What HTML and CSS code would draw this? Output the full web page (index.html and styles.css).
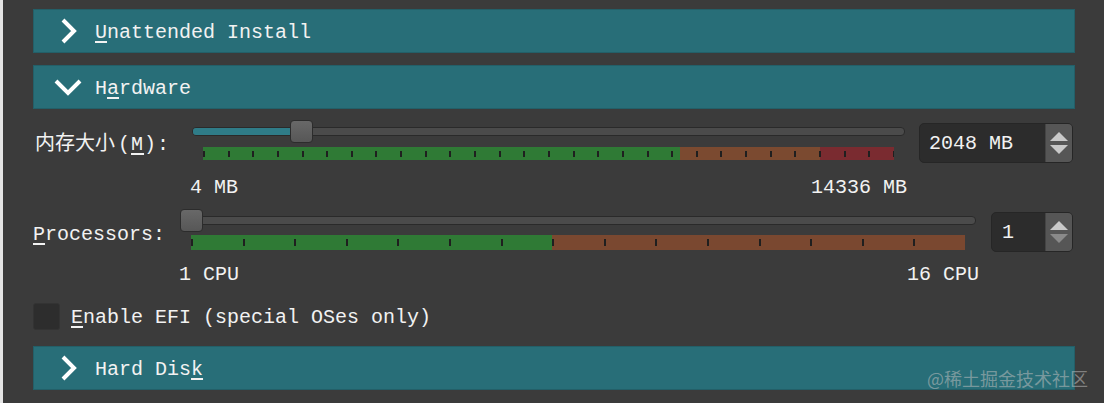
FILE: index.html
```html
<!DOCTYPE html>
<html lang="zh-CN">
<head>
    <meta charset="UTF-8">
    <title>Hardware</title>
    <link rel="stylesheet" href="styles.css">
</head>
<body>
    <div class="page">
        <div class="section-bar">
            <svg class="chevron" width="28" height="28" viewBox="0 0 28 28"><path d="M9 3 L20 14 L9 25" /></svg>
            <span class="bar-text"><u>U</u>nattended Install</span>
        </div>

        <div class="section-bar bar-open">
            <svg class="chevron" width="28" height="28" viewBox="0 0 28 28"><path d="M2 8 L14 20 L26 8" /></svg>
            <span class="bar-text">H<u>a</u>rdware</span>
        </div>

        <div class="row row-mem">
            <div class="label label-mem">内存大小<span class="mnemonic">(<u>M</u>):</span></div>
            <div class="slider-col slider-mem">
                <div class="slider">
                    <div class="groove"><div class="groove-fill"></div></div>
                    <div class="handle" style="left: 98px"></div>
                </div>
                <div class="scale scale-mem"></div>
                <div class="scale-labels"><span>4 MB</span><span>14336 MB</span></div>
            </div>
            <div class="spinbox spin-mem">
                <span class="spin-value">2048 MB</span>
                <span class="spin-buttons"><i class="arrow-up"></i><i class="arrow-down"></i></span>
            </div>
        </div>

        <div class="row row-cpu">
            <div class="label label-cpu"><u>P</u>rocessors:</div>
            <div class="slider-col slider-cpu">
                <div class="slider">
                    <div class="groove"></div>
                    <div class="handle" style="left: 0"></div>
                </div>
                <div class="scale scale-cpu"></div>
                <div class="scale-labels"><span>1 CPU</span><span>16 CPU</span></div>
            </div>
            <div class="spinbox spin-cpu">
                <span class="spin-value">1</span>
                <span class="spin-buttons"><i class="arrow-up"></i><i class="arrow-down dim"></i></span>
            </div>
        </div>

        <label class="check-row">
            <span class="checkbox"></span>
            <span class="check-text"><u>E</u>nable EFI (special OSes only)</span>
        </label>

        <div class="section-bar bar-disk">
            <svg class="chevron" width="28" height="28" viewBox="0 0 28 28"><path d="M9 3 L20 14 L9 25" /></svg>
            <span class="bar-text">Hard Dis<u>k</u></span>
        </div>
    </div>

    <div class="watermark">@稀土掘金技术社区</div>
</body>
</html>
```

FILE: styles.css
```css
body {
    margin: 0;
    padding: 0;
    width: 1104px;
    height: 403px;
    overflow: hidden;
    background: #3b3b3b;
    border-left: 3px solid #e4e4e4;
    box-sizing: border-box;
    font-family: 'Liberation Mono', 'Noto Sans CJK SC', monospace;
    font-size: 20px;
    color: #f2f2f2;
    position: relative;
}
u {
    text-decoration-thickness: 2px;
    text-underline-offset: 3px;
}
.page {
    padding: 9px 29px 0 30px;
}
.section-bar {
    height: 44px;
    box-sizing: border-box;
    background: #286e78;
    border: 1px solid #235f68;
    display: flex;
    align-items: center;
    padding-left: 20px;
}
.bar-text {
    padding-top: 3px;
}
.bar-open {
    margin-top: 12px;
}
.bar-disk {
    margin-top: 16px;
}
.chevron {
    margin-right: 13px;
    flex: none;
}
.chevron path {
    fill: none;
    stroke: #ffffff;
    stroke-width: 4;
}

/* slider rows */
.row {
    display: flex;
    align-items: flex-start;
}
.row-mem {
    margin-top: 11px;
}
.row-cpu {
    margin-top: 11px;
}
.label {
    line-height: 24px;
    flex: none;
}
.label-mem {
    width: 157px;
    margin-top: 13px;
    padding-left: 2px;
}
.mnemonic {
    letter-spacing: 1px;
    margin-left: 3px;
}
.label-cpu {
    width: 147px;
    margin-top: 14px;
}
.slider-col {
    flex: none;
}
.slider-mem {
    width: 713px;
}
.slider-cpu {
    width: 796px;
}
.slider {
    position: relative;
    height: 24px;
}
.groove {
    position: absolute;
    left: 0;
    right: 0;
    top: 7px;
    height: 9px;
    box-sizing: border-box;
    background: #4b4b4b;
    border: 1px solid #2a2a2a;
    border-radius: 4px;
    overflow: hidden;
}
.groove-fill {
    width: 104px;
    height: 100%;
    background: #2f7c88;
}
.handle {
    position: absolute;
    top: 0;
    width: 23px;
    height: 23px;
    box-sizing: border-box;
    background: linear-gradient(#686868, #575757);
    border: 1px solid #2c2c2c;
    border-radius: 4px;
}
.scale {
    margin: 3px 11px 0;
    height: 13px;
}
.scale-mem {
    background:
        repeating-linear-gradient(to right, #1f1f1f 0 2px, transparent 2px 24.64px) center / 100% 6px no-repeat,
        linear-gradient(to right, #2f7a35 0 69.1%, #7b4a30 69.1% 89.3%, #7a2b30 89.3%);
}
.scale-cpu {
    height: 15px;
    margin-top: 2px;
    background:
        repeating-linear-gradient(to right, #1f1f1f 0 2px, transparent 2px 51.6px) center / 100% 7px no-repeat,
        linear-gradient(to right, #2f7a35 0 46.7%, #7a4830 46.7%);
}
.scale-labels {
    display: flex;
    justify-content: space-between;
    line-height: 20px;
    margin: 18px -2px 0;
}
.slider-cpu .scale-labels {
    margin: 15px -3px 0 -1px;
}

/* spin boxes */
.spinbox {
    flex: none;
    display: flex;
    height: 40px;
    box-sizing: border-box;
    margin-top: 3px;
    background: #2c2c2c;
    border: 1px solid #262626;
    border-radius: 5px;
    overflow: hidden;
}
.spin-mem {
    width: 154px;
    margin-left: 14px;
}
.spin-cpu {
    width: 82px;
    margin-left: 15px;
}
.spin-value {
    flex: 1;
    padding: 2px 0 0 9px;
    line-height: 36px;
}
.spin-cpu .spin-value {
    padding-left: 10px;
}
.spin-buttons {
    width: 26px;
    background: #565656;
    border-left: 1px solid #444;
    display: flex;
    flex-direction: column;
    align-items: center;
    justify-content: center;
    gap: 4px;
}
.arrow-up, .arrow-down {
    width: 0;
    height: 0;
    border-left: 9px solid transparent;
    border-right: 9px solid transparent;
}
.arrow-up {
    border-bottom: 9px solid #c9c9c9;
}
.arrow-down {
    border-top: 9px solid #c9c9c9;
}
.arrow-down.dim {
    border-top-color: #8a8a8a;
}

/* checkbox */
.check-row {
    display: flex;
    align-items: flex-start;
    margin-top: 18px;
    gap: 11px;
}
.check-text {
    line-height: 24px;
    padding-top: 3px;
}
.checkbox {
    flex: none;
    width: 27px;
    height: 27px;
    box-sizing: border-box;
    background: #2d2d2d;
    border: 1px solid #333;
    border-radius: 3px;
}

.watermark {
    position: absolute;
    right: 16px;
    bottom: 12px;
    font-family: 'Noto Sans CJK SC', sans-serif;
    font-size: 18px;
    color: rgba(190, 190, 190, 0.55);
}
```
